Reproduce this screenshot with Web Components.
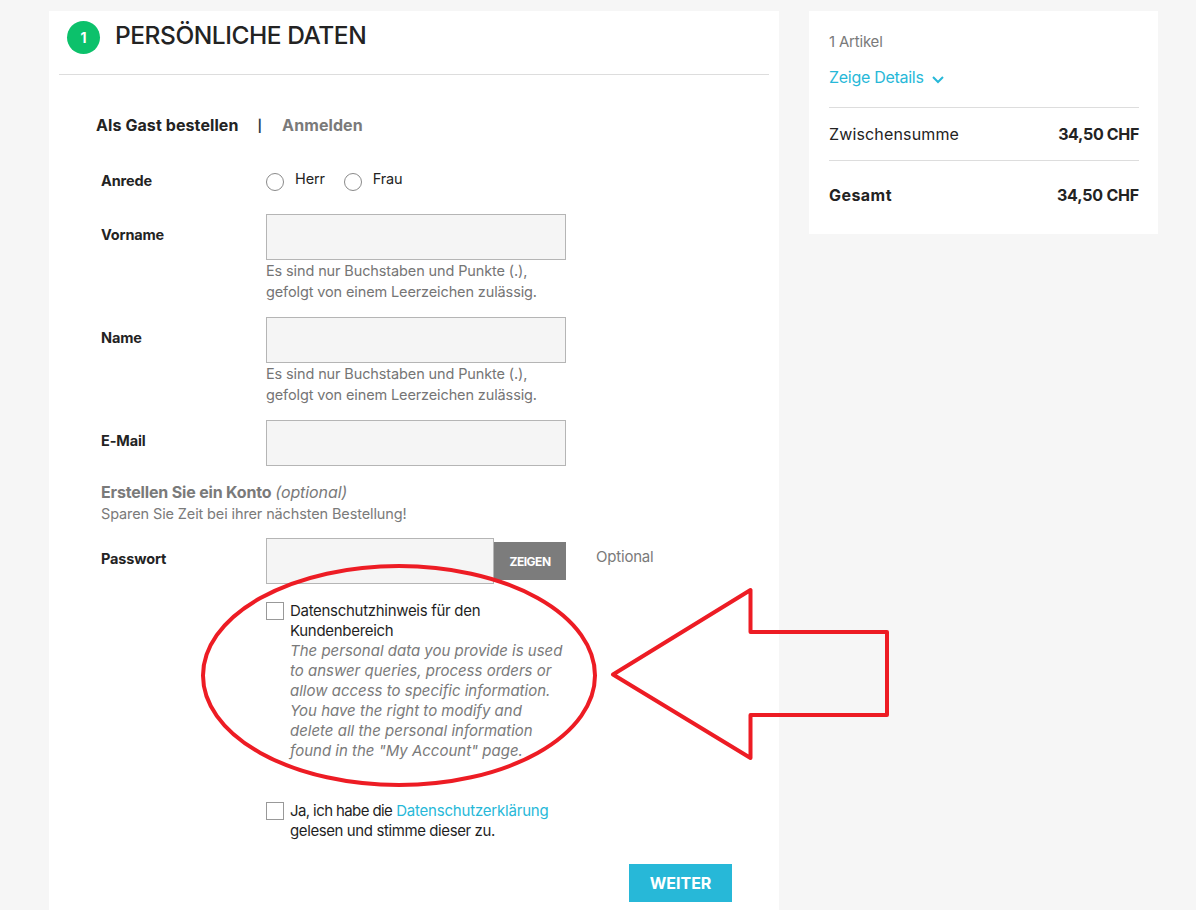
<!doctype html>
<html lang="de">
<head>
<meta charset="utf-8">
<title>Persönliche Daten</title>
<style>
  html, body { margin: 0; height: 100%; overflow: hidden; }
  body { background: #f6f6f6; font: 14.5px/21px Inter, "Noto Sans", sans-serif; color: #232323; }
  .page { position: relative; display: flex; gap: 30px; padding: 11px 0 0 49px; height: 899px; }
</style>
</head>
<body>

<template id="t-step-card">
  <style>
    :host { display: block; width: 730px; height: 899px; background: #fff; box-sizing: border-box; }
    header { display: flex; align-items: flex-start; gap: 15px; height: 64px; box-sizing: border-box; margin: 0 10px; padding: 10px 0 0 8px; border-bottom: 1px solid #ddd; }
    .num { width: 33px; height: 33px; border-radius: 50%; background: #0cc16b; color: #fff; font-weight: 700; font-size: 14px; display: flex; align-items: center; justify-content: center; }
    h1 { margin: 0; font-size: 24.5px; line-height: 28px; font-weight: 500; color: #232323; letter-spacing: -.45px; }
    .body { padding: 39px 47px 0 47px; }
  </style>
  <header><span class="num"><slot name="num"></slot></span><h1><slot name="title"></slot></h1></header>
  <div class="body"><slot></slot></div>
</template>

<template id="t-login-tabs">
  <style>
    :host { display: flex; align-items: center; height: 22px; font-size: 16px; font-weight: 700; letter-spacing: .09px; color: #232323; margin-bottom: 33px; }
    .sep { margin: 0 20px 0 19px; font-size: 12px; color: #2b3a4a; }
    .off { color: #7a7a7a; }
  </style>
  <span>Als Gast bestellen</span><span class="sep">|</span><span class="off">Anmelden</span>
</template>

<template id="t-form-row">
  <style>
    :host { display: grid; grid-template-columns: 165px 300px auto; padding-left: 5px; }
    .label { font-weight: 700; font-size: 14.5px; letter-spacing: -.15px; padding-top: var(--label-pad, 10px); line-height: 21px; }
    .side { color: #7a7a7a; font-size: 15px; padding: 8px 0 0 30px; letter-spacing: -.2px; white-space: nowrap; }
  </style>
  <div class="label"><slot name="label"></slot></div>
  <div class="field"><slot></slot></div>
  <div class="side"><slot name="side"></slot></div>
</template>

<template id="t-radio-group">
  <style>
    :host { display: flex; height: 22px; gap: 19px; font-size: 14.5px; letter-spacing: -.15px; color: #232323; }
    .r { display: flex; gap: 11px; }
    i { display: block; width: 16px; height: 16px; border: 1px solid #8a8a8a; border-radius: 50%; margin-top: 4px; }
    span { line-height: 17px; margin-top: 1px; }
  </style>
  <div class="r"><i></i><span>Herr</span></div>
  <div class="r"><i></i><span>Frau</span></div>
</template>

<template id="t-text-field">
  <style>
    :host { display: block; font-size: 14.5px; letter-spacing: -.12px; color: #757575; }
    .box { display: block; height: 46px; box-sizing: border-box; background: #f5f5f5; border: 1px solid #b5b5b5; }
    .help { line-height: 21px; white-space: pre-line; }
    .help:empty { display: none; }
  </style>
  <div class="box"></div>
  <div class="help"></div>
</template>

<template id="t-password-field">
  <style>
    :host { display: flex; align-items: flex-end; height: 46px; }
    .box { width: 228px; height: 46px; box-sizing: border-box; background: #f5f5f5; border: 1px solid #b5b5b5; }
    button { width: 72px; height: 38px; margin-bottom: 4px; border: 0; background: #7c7c7c; color: #fff; font: 700 12px Inter, sans-serif; letter-spacing: -.5px; padding: 0; }
  </style>
  <div class="box"></div><button type="button">ZEIGEN</button>
</template>

<template id="t-consent-check">
  <style>
    :host { display: flex; gap: 6px; margin-left: 170px; width: 300px; font-size: 15px; line-height: 20px; letter-spacing: -.3px; color: #1f1f1f; }
    i { flex: none; display: block; width: 16px; height: 16px; border: 1px solid #999; background: #fff; margin-top: 1px; }
    ::slotted(a) { color: #27b8d8; text-decoration: none; letter-spacing: -.2px; }
    ::slotted(em) { display: block; color: #7a7a7a; font-size: 15px; letter-spacing: 0; }
    ::slotted(.tight) { letter-spacing: -.6px; }
    ::slotted(.close) { letter-spacing: -.4px; }
  </style>
  <i></i><div><slot></slot></div>
</template>

<template id="t-order-summary">
  <style>
    :host { display: block; width: 349px; height: 223px; box-sizing: border-box; background: #fff; padding: 20px 19px 0 20px; font-size: 16px; color: #232323; }
    .count { color: #7a7a7a; font-size: 15px; letter-spacing: -.2px; line-height: 21px; }
    .details { display: flex; align-items: center; gap: 7px; color: #27b8d8; letter-spacing: -.28px; margin-top: 13px; line-height: 21px; height: 25px; }
    .details svg { margin-top: 3px; }
    .line { display: flex; justify-content: space-between; align-items: center; border-top: 1px solid #ddd; }
    .sub { margin-top: 17px; height: 52px; }
    .sub span { letter-spacing: .15px; }
    .total { height: 68px; padding-top: 1px; box-sizing: border-box; }
    .total b { letter-spacing: -.2px; }
    .total b:first-child { letter-spacing: .45px; }
    b { font-weight: 700; letter-spacing: -.33px; }
  </style>
  <div class="count">1 Artikel</div>
  <div class="details">Zeige Details
    <svg width="14" height="9" viewBox="0 0 14 9"><path d="M2 2l5 5 5-5" fill="none" stroke="#27b8d8" stroke-width="2"/></svg>
  </div>
  <div class="line sub"><span>Zwischensumme</span><b>34,50 CHF</b></div>
  <div class="line total"><b>Gesamt</b><b>34,50 CHF</b></div>
</template>

<template id="t-red-markup">
  <style>
    :host { position: absolute; left: 0; top: 0; width: 1196px; height: 910px; pointer-events: none; }
    svg { display: block; }
  </style>
  <svg width="1196" height="910" viewBox="0 0 1196 910" fill="none" stroke="#ed1c24" stroke-width="4">
    <ellipse cx="399" cy="675.5" rx="196" ry="109.5"/>
    <path stroke-linejoin="round" d="M613 674.5L750.500 590V632H887V715H750.500V758Z"/>
  </svg>
</template>

<div class="page">
  <step-card>
    <span slot="num">1</span>
    <span slot="title">PERSÖNLICHE DATEN</span>

    <login-tabs></login-tabs>

    <form-row style="height:50px;--label-pad:1px"><span slot="label">Anrede</span><radio-group></radio-group></form-row>
    <form-row style="margin-top:-5px;height:108px"><span slot="label">Vorname</span><text-field help="Es sind nur Buchstaben und Punkte (.),&#10;gefolgt von einem Leerzeichen zulässig."></text-field></form-row>
    <form-row style="margin-top:-5px;height:108px"><span slot="label">Name</span><text-field help="Es sind nur Buchstaben und Punkte (.),&#10;gefolgt von einem Leerzeichen zulässig."></text-field></form-row>
    <form-row style="margin-top:-5px;height:62px"><span slot="label">E-Mail</span><text-field></text-field></form-row>

    <section-note></section-note>

    <form-row style="height:63px"><span slot="label">Passwort</span><password-field></password-field><span slot="side">Optional</span></form-row>

    <consent-check>Datenschutzhinweis für den Kundenbereich
      <em>The personal data you provide is used to answer queries, process orders or allow access to specific information. You have the right to modify and delete all the personal information found in the "My Account" page.</em>
    </consent-check>
    <consent-check style="margin-top:40px"><span class="tight">Ja, ich habe die</span> <a href="#">Datenschutzerklärung</a> <span class="close">gelesen und stimme dieser zu.</span></consent-check>

    <submit-bar></submit-bar>
  </step-card>

  <order-summary></order-summary>
  <red-markup></red-markup>
</div>

<script>
  // simple wrapper: each tag just stamps its template into an open shadow root
  function stamp(tag, init) {
    customElements.define(tag, class extends HTMLElement {
      connectedCallback() {
        if (this.shadowRoot) return;
        const root = this.attachShadow({ mode: 'open' });
        root.appendChild(document.getElementById('t-' + tag).content.cloneNode(true));
        if (init) init(this, root);
      }
    });
  }

  stamp('step-card');
  stamp('login-tabs');
  stamp('form-row');
  stamp('radio-group');
  stamp('text-field', function (el, root) {
    root.querySelector('.help').textContent = el.getAttribute('help') || '';
  });
  stamp('password-field');
  stamp('consent-check');
  stamp('order-summary');
  stamp('red-markup');

  customElements.define('section-note', class extends HTMLElement {
    connectedCallback() {
      if (this.shadowRoot) return;
      this.attachShadow({ mode: 'open' }).innerHTML =
        '<style>' +
          ':host{display:block;padding-left:5px;height:56px;letter-spacing:-.12px;color:#7a7a7a;font-size:14.5px}' +
          'b{font-size:16px;font-weight:700;letter-spacing:-.17px}' +
          'i{font-size:16px;letter-spacing:-.1px}' +
          'div{line-height:21px}' +
        '</style>' +
        '<div><b>Erstellen Sie ein Konto</b> <i>(optional)</i></div>' +
        '<div>Sparen Sie Zeit bei ihrer nächsten Bestellung!</div>';
    }
  });

  customElements.define('submit-bar', class extends HTMLElement {
    connectedCallback() {
      if (this.shadowRoot) return;
      this.attachShadow({ mode: 'open' }).innerHTML =
        '<style>' +
          ':host{display:flex;justify-content:flex-end;margin-top:23px}' +
          'button{width:103px;height:38px;border:0;padding:0;background:#27b8d8;color:#fff;font:700 16px Inter,sans-serif;letter-spacing:0}' +
        '</style>' +
        '<button type="button">WEITER</button>';
    }
  });
</script>
</body>
</html>
